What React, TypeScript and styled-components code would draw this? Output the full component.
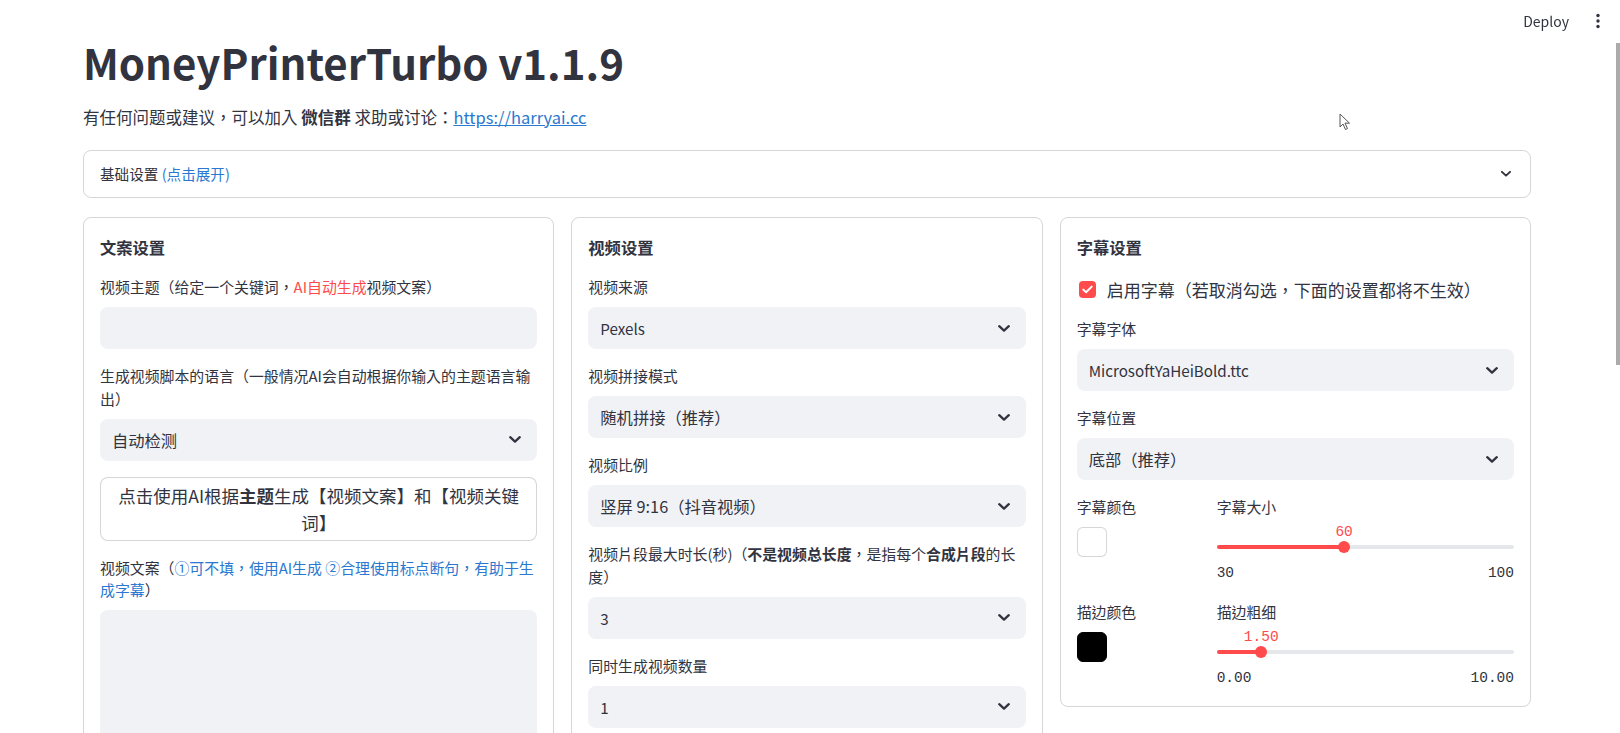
import React from "react";
import styled, { createGlobalStyle } from "styled-components";

const FONT = `"Noto Sans CJK TC", "Noto Sans CJK SC", "Noto Sans", sans-serif`;
const MONO = `"Liberation Mono", "DejaVu Sans Mono", monospace`;
const TEXT = "#31333f";
const RED = "#ff4b4b";
const BLUE = "#2a78d0";
const FIELD_BG = "#f0f2f6";
const BORDER = "rgba(49, 51, 63, 0.2)";

const GlobalStyle = createGlobalStyle`
  html, body {
    margin: 0;
    padding: 0;
    height: 733px;
    overflow: hidden;
    background: #ffffff;
    font-family: ${FONT};
    color: ${TEXT};
  }
  * { box-sizing: border-box; }
`;

const Header = styled.header`
  position: fixed;
  top: 0;
  right: 0;
  height: 42px;
  display: flex;
  align-items: center;
  gap: 27px;
  padding-right: 20px;
`;

const DeployButton = styled.span`
  font-size: 14px;
  line-height: 20px;
  color: ${TEXT};
`;

const ScrollThumb = styled.div`
  position: fixed;
  right: 0;
  top: 43px;
  width: 4px;
  height: 322px;
  background: #ababab;
`;

const Cursor = styled.svg`
  position: fixed;
  left: 1339px;
  top: 113px;
`;

const Main = styled.main`
  width: 1448px;
  margin-left: 83px;
  padding-top: 34px;
`;

const Title = styled.h1`
  margin: 0;
  font-size: 42px;
  line-height: 56px;
  font-weight: 700;
  color: ${TEXT};
`;

const Subtitle = styled.p`
  margin: 14px 0 0;
  font-size: 16.5px;
  line-height: 27px;
  color: ${TEXT};
  b { font-weight: 700; }
  a { color: ${BLUE}; text-decoration: underline; }
`;

const Expander = styled.div`
  margin-top: 19px;
  height: 48px;
  border: 1px solid ${BORDER};
  border-radius: 8px;
  display: flex;
  align-items: center;
  justify-content: space-between;
  padding: 0 18px 0 16px;
  font-size: 14.6px;
  line-height: 22px;
`;

const Colored = styled.span<{ $color: string }>`
  color: ${(p) => p.$color};
`;

const Columns = styled.div`
  margin-top: 19px;
  display: grid;
  grid-template-columns: repeat(3, 1fr);
  gap: 17px;
  align-items: start;
`;

const Card = styled.section`
  border: 1px solid ${BORDER};
  border-radius: 8px;
  padding: 16px;
  display: flex;
  flex-direction: column;
  gap: 16px;
`;

const CardTitle = styled.h3`
  margin: 0;
  font-size: 16.3px;
  line-height: 26px;
  font-weight: 700;
`;

const Field = styled.div`
  display: flex;
  flex-direction: column;
`;

const Label = styled.label`
  font-size: 14.9px;
  line-height: 22.5px;
  margin-bottom: 8.5px;
  b { font-weight: 700; }
`;

const TextInput = styled.div`
  height: 42px;
  background: ${FIELD_BG};
  border-radius: 8px;
`;

const TextArea = styled.div`
  height: 200px;
  background: ${FIELD_BG};
  border-radius: 8px;
`;

const SelectBox = styled.div`
  height: 42px;
  background: ${FIELD_BG};
  border-radius: 8px;
  display: flex;
  align-items: center;
  justify-content: space-between;
  padding: 0 15px 0 12px;
  color: ${TEXT};
`;

const SelectValue = styled.span<{ $latin?: boolean }>`
  font-size: ${(p) => (p.$latin ? "15.2px" : "16.3px")};
`;

const GenButton = styled.button`
  font-family: ${FONT};
  background: #fff;
  border: 1px solid ${BORDER};
  border-radius: 8px;
  padding: 4px 12px;
  font-size: 17.5px;
  line-height: 27px;
  color: ${TEXT};
  text-align: center;
  b { font-weight: 700; }
`;

const CheckRow = styled.label`
  height: 26px;
  display: flex;
  align-items: center;
  gap: 11px;
  padding-left: 2px;
  font-size: 17px;
`;

const CheckBox = styled.span`
  width: 17px;
  height: 17px;
  border-radius: 4px;
  background: ${RED};
  display: flex;
  align-items: center;
  justify-content: center;
`;

const SubGrid = styled.div`
  display: grid;
  grid-template-columns: 124px 1fr;
  column-gap: 16px;
  row-gap: 16px;
`;

const Swatch = styled.div<{ $color: string }>`
  width: 30px;
  height: 30px;
  border-radius: 6px;
  background: ${(p) => p.$color};
  border: 1px solid ${(p) => (p.$color === "#000000" ? "#000" : BORDER)};
`;

const SliderWrap = styled.div`
  padding-bottom: 4px;
`;

const TrackArea = styled.div`
  position: relative;
  height: 38px;
`;

const Track = styled.div`
  position: absolute;
  left: 0;
  right: 0;
  top: 18px;
  height: 4px;
  border-radius: 2px;
  background: #e6e7eb;
`;

const TrackFill = styled.div`
  position: absolute;
  left: 0;
  top: 0;
  bottom: 0;
  border-radius: 2px;
  background: ${RED};
`;

const Thumb = styled.div`
  position: absolute;
  top: 14px;
  width: 12px;
  height: 12px;
  margin-left: -6px;
  border-radius: 50%;
  background: ${RED};
`;

const ThumbValue = styled.div`
  position: absolute;
  top: -3px;
  transform: translateX(-50%);
  font-family: ${MONO};
  font-size: 14.5px;
  line-height: 16px;
  color: ${RED};
  white-space: nowrap;
`;

const Ticks = styled.div`
  margin-top: 0;
  display: flex;
  justify-content: space-between;
  font-family: ${MONO};
  font-size: 14.5px;
  line-height: 16px;
  color: ${TEXT};
`;

const Chevron = ({ size = 14 }: { size?: number }) => (
  <svg width={size} height={size * 0.64} viewBox="0 0 14 9" fill="none">
    <path d="M2.2 2.2 L7 6.6 L11.8 2.2" stroke={TEXT} strokeWidth="2.3" strokeLinecap="round" strokeLinejoin="round" />
  </svg>
);

const Select = ({ value, latin }: { value: string; latin?: boolean }) => (
  <SelectBox>
    <SelectValue $latin={latin}>{value}</SelectValue>
    <Chevron />
  </SelectBox>
);

const Slider = ({ min, max, value, fmt }: { min: number; max: number; value: number; fmt: (n: number) => string }) => {
  const pct = ((value - min) / (max - min)) * 100;
  return (
    <SliderWrap>
      <TrackArea>
        <Track>
          <TrackFill style={{ width: `${pct}%` }} />
        </Track>
        <Thumb style={{ left: `${pct}%` }} />
        <ThumbValue style={{ left: `${pct}%` }}>{fmt(value)}</ThumbValue>
      </TrackArea>
      <Ticks>
        <span>{fmt(min)}</span>
        <span>{fmt(max)}</span>
      </Ticks>
    </SliderWrap>
  );
};

export default function App() {
  return (
    <>
      <GlobalStyle />
      <Header>
        <DeployButton>Deploy</DeployButton>
        <svg width="4" height="16" viewBox="0 0 4 16">
          <circle cx="2" cy="2.5" r="1.7" fill={TEXT} />
          <circle cx="2" cy="8" r="1.7" fill={TEXT} />
          <circle cx="2" cy="13.5" r="1.7" fill={TEXT} />
        </svg>
      </Header>
      <ScrollThumb />
      <Cursor width="12" height="18" viewBox="0 0 12 18">
        <path d="M1 1 L1 14 L4 11 L6.5 16.5 L8.5 15.6 L6 10.2 L10.5 10.2 Z" fill="#fff" stroke="#555" strokeWidth="1" strokeLinejoin="round" />
      </Cursor>
      <Main>
        <Title>MoneyPrinterTurbo v1.1.9</Title>
        <Subtitle>
          有任何问题或建议，可以加入 <b>微信群</b> 求助或讨论：<a href="#">https://harryai.cc</a>
        </Subtitle>
        <Expander>
          <span>
            基础设置 <Colored $color={BLUE}>(点击展开)</Colored>
          </span>
          <Chevron size={12} />
        </Expander>
        <Columns>
          <Card>
            <CardTitle>文案设置</CardTitle>
            <Field>
              <Label>
                视频主题（给定一个关键词，<Colored $color={RED}>AI自动生成</Colored>视频文案）
              </Label>
              <TextInput />
            </Field>
            <Field>
              <Label>
                生成视频脚本的语言（一般情况AI会自动根据你输入的主题语言输
                <br />
                出）
              </Label>
              <Select value="自动检测" />
            </Field>
            <GenButton>
              点击使用AI根据<b>主题</b>生成【视频文案】和【视频关键
              <br />
              词】
            </GenButton>
            <Field>
              <Label>
                视频文案（<Colored $color={BLUE}>①可不填，使用AI生成 ②合理使用标点断句，有助于生成字幕</Colored>）
              </Label>
              <TextArea />
            </Field>
          </Card>
          <Card>
            <CardTitle>视频设置</CardTitle>
            <Field>
              <Label>视频来源</Label>
              <Select value="Pexels" latin />
            </Field>
            <Field>
              <Label>视频拼接模式</Label>
              <Select value="随机拼接（推荐）" />
            </Field>
            <Field>
              <Label>视频比例</Label>
              <Select value="竖屏 9:16（抖音视频）" />
            </Field>
            <Field>
              <Label>
                视频片段最大时长(秒)（<b>不是视频总长度</b>，是指每个<b>合成片段</b>的长
                <br />
                度）
              </Label>
              <Select value="3" latin />
            </Field>
            <Field>
              <Label>同时生成视频数量</Label>
              <Select value="1" latin />
            </Field>
          </Card>
          <Card>
            <CardTitle>字幕设置</CardTitle>
            <CheckRow>
              <CheckBox>
                <svg width="11" height="9" viewBox="0 0 11 9">
                  <path d="M1.3 4.6 L4.1 7.3 L9.7 1.6" stroke="#fff" strokeWidth="2" fill="none" strokeLinecap="round" strokeLinejoin="round" />
                </svg>
              </CheckBox>
              启用字幕（若取消勾选，下面的设置都将不生效）
            </CheckRow>
            <Field>
              <Label>字幕字体</Label>
              <Select value="MicrosoftYaHeiBold.ttc" latin />
            </Field>
            <Field>
              <Label>字幕位置</Label>
              <Select value="底部（推荐）" />
            </Field>
            <SubGrid>
              <Field>
                <Label>字幕颜色</Label>
                <Swatch $color="#ffffff" />
              </Field>
              <Field>
                <Label>字幕大小</Label>
                <Slider min={30} max={100} value={60} fmt={(n) => String(n)} />
              </Field>
              <Field>
                <Label>描边颜色</Label>
                <Swatch $color="#000000" />
              </Field>
              <Field>
                <Label>描边粗细</Label>
                <Slider min={0} max={10} value={1.5} fmt={(n) => n.toFixed(2)} />
              </Field>
            </SubGrid>
          </Card>
        </Columns>
      </Main>
    </>
  );
}
